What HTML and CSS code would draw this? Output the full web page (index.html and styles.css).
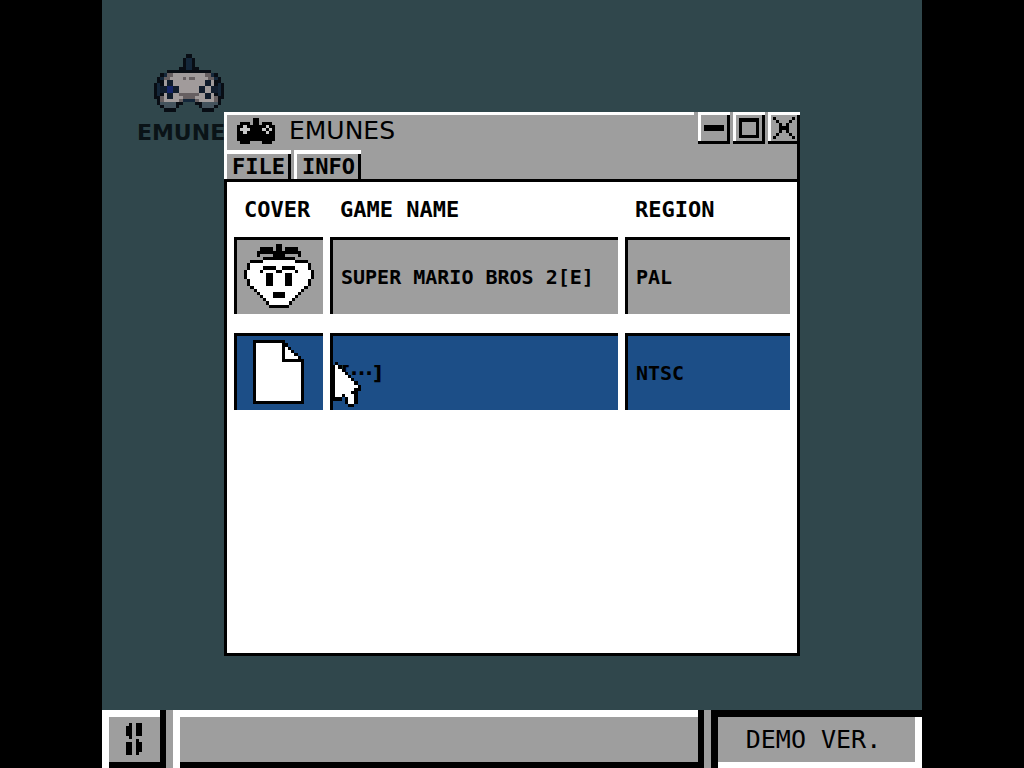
FILE: index.html
```
<!DOCTYPE html>
<html lang="en">
<head>
    <meta charset="UTF-8">
    <meta name="viewport" content="width=device-width, initial-scale=1.0">
    <title>EMUNES</title>
    <link rel="stylesheet" href="styles.css">
</head>
<body>
    <div class="screen">
        <main class="desktop">
            <button type="button" class="desktop-icon">
                <svg class="sprite" width="70" height="58" viewBox="0 -0.5 22 18" aria-hidden="true">
                    <path stroke="#080d14" d="M10 0h2M9 1h4M9 2h4M9 3h4M8 4h6M4 5h14M2 6h18M1 7h20M1 8h20M0 9h22M0 10h22M0 11h22M0 12h22M0 13h22M1 14h20M1 15h8M13 15h8M2 16h6M14 16h6M3 17h4M15 17h4" />
                    <path stroke="#14273a" d="M10 1h2M10 2h2M10 3h2M10 4h2M3 6h1M18 6h1M2 7h1M19 7h1M1 9h1M20 9h1M1 10h1M20 10h1M1 11h1M20 11h1M1 12h1M20 12h1M9 14h4" />
                    <path stroke="#a19b9b" d="M6 6h10M5 7h12M3 8h16M3 9h16M2 10h18M2 11h18M3 12h16M3 13h6M13 13h6M3 14h5M14 14h5" />
                    <path stroke="#665f61" d="M4 6h2M16 6h2M3 7h2M9 7h1M11 7h2M17 7h2M8 12h6M2 13h1M9 13h4M19 13h1M2 14h1M8 14h1M13 14h1M19 14h1" />
                    <path stroke="#44535d" d="M2 15h5M15 15h5M3 16h4M15 16h4" />
                    <path stroke="#101c2c" d="M4 8h2M4 9h2M2 10h6M2 11h6M4 12h2M4 13h2M16 8h2M16 9h2M14 10h2M18 10h2M14 11h2M18 11h2M16 12h2M16 13h2" />
                    <path stroke="#142468" d="M4 10h2M4 11h2" />
                </svg>
                <span>EMUNES</span>
            </button>

            <section class="window">
                <header class="window-header">
                    <div class="titlebar">
                        <h1 class="title">
                            <svg class="sprite" width="38" height="26" viewBox="0 -0.5 12 8" aria-hidden="true">
                                <path stroke="#000" d="M5 0h2M1 1h3M5 1h2M8 1h3M0 2h12M0 3h12M0 4h12M0 5h12M0 6h12M1 7h3M8 7h3" />
                                <path stroke="#c8c8c8" d="M2 2h1M1 3h3M2 4h1M9 2h1M8 3h1M10 3h1M9 4h1" />
                            </svg>
                            EMUNES
                        </h1>
                        <div class="controls">
                            <button type="button" class="control" aria-label="Minimize">
                                <svg class="sprite" width="20" height="20" viewBox="0 0 20 20"><path fill="#000" d="M0 7h20v6h-20z" /></svg>
                            </button>
                            <button type="button" class="control" aria-label="Maximize">
                                <svg class="sprite" width="20" height="20" viewBox="0 0 20 20"><path fill="#000" fill-rule="evenodd" d="M0 0h20v20h-20zM3 4v13h14v-13z" /></svg>
                            </button>
                            <button type="button" class="control" aria-label="Close">
                                <svg class="sprite" width="22" height="22" viewBox="0 -0.5 7 7"><path stroke="#000" d="M0 0h1M6 0h1M1 1h1M5 1h1M2 2h1M4 2h1M2 3h3M2 4h1M4 4h1M1 5h1M5 5h1M0 6h1M6 6h1" /></svg>
                            </button>
                        </div>
                    </div>
                    <nav class="menu">
                        <button type="button" class="menu-tab">FILE</button>
                        <button type="button" class="menu-tab">INFO</button>
                    </nav>
                </header>

                <div class="window-body">
                    <table class="games">
                        <thead>
                            <tr>
                                <th class="col-cover">COVER</th>
                                <th class="col-name">GAME NAME</th>
                                <th>REGION</th>
                            </tr>
                        </thead>
                        <tbody>
                            <tr>
                                <td class="cover">
                                    <svg class="sprite" width="70" height="64" viewBox="0 -0.5 22 20" role="img" aria-label="Strawberry">
                                        <path stroke="#fff" d="M6 5h10M2 6h18M2 7h18M1 8h20M1 9h20M1 10h20M2 11h18M2 12h18M3 13h16M4 14h14M5 15h12M6 16h10M7 17h8M8 18h6" />
                                        <path stroke="#000" d="M10 0h2M5 1h4M10 1h2M13 1h4M4 2h14M4 3h1M9 3h4M17 3h1M6 4h10M2 5h4M16 5h4M1 6h1M20 6h1M1 7h1M20 7h1M0 8h1M21 8h1M0 9h1M21 9h1M0 10h1M21 10h1M1 11h1M20 11h1M1 12h1M20 12h1M2 13h1M19 13h1M3 14h1M18 14h1M4 15h1M17 15h1M5 16h1M16 16h1M6 17h1M15 17h1M7 18h1M14 18h1M8 19h6" />
                                        <path stroke="#000" d="M6 7h4M12 7h4M5 8h1M10 8h2M16 8h1M7 9h2M13 9h2M7 10h2M13 10h2M7 11h2M13 11h2M7 12h2M13 12h2M9 15h4M9 16h4" />
                                    </svg>
                                </td>
                                <td>SUPER MARIO BROS 2[E]</td>
                                <td>PAL</td>
                            </tr>
                            <tr class="selected">
                                <td class="cover">
                                    <svg class="sprite" width="51" height="64" viewBox="0 0 16 20" role="img" aria-label="No cover">
                                        <path fill="#fff" d="M0 0h10v1h1v1h1v1h1v1h1v1h1v1h1v14h-16z" />
                                        <path fill="#000" d="M0 0h10v1h1v1h1v1h1v1h1v1h1v1h1v14h-16zM1 1v18h14v-12h-6v-6zM10 2v4h4v-1h-1v-1h-1v-1h-1v-1z" fill-rule="evenodd" />
                                    </svg>
                                </td>
                                <td class="no-name">[···]</td>
                                <td>NTSC</td>
                            </tr>
                        </tbody>
                    </table>
                </div>
            </section>

            <svg class="sprite cursor" width="32" height="45" viewBox="0 -0.5 10 14" aria-hidden="true">
                <path stroke="#000" d="M1 0h1M0 1h3M0 2h4M0 3h5M0 4h6M0 5h7M0 6h8M0 7h9M0 8h9M0 9h8M0 10h8M0 11h3M4 11h4M4 12h4M5 13h2" />
                <path stroke="#fff" d="M1 1h1M1 2h2M1 3h3M1 4h4M1 5h5M1 6h6M1 7h7M1 8h6M1 9h5M1 10h2M4 10h3M5 11h2M5 12h2" />
            </svg>
        </main>

        <footer class="taskbar">
            <button type="button" class="start" aria-label="Start">
                <svg class="sprite" width="16" height="32" viewBox="0 -0.5 5 10">
                    <path stroke="#000" d="M1 0h1M0 1h2M0 2h2M0 3h2M1 4h1M3 0h2M3 1h2M3 2h2M3 3h2M0 6h2M0 7h2M0 8h2M0 9h2M3 5h1M3 6h2M3 7h2M3 8h2M3 9h1" />
                </svg>
            </button>
            <div class="tasks"></div>
            <div class="version">DEMO VER.</div>
        </footer>
    </div>
</body>
</html>
```
FILE: styles.css
```
* {
    box-sizing: border-box;
}
body {
    margin: 0;
    background: #000;
    color: #000;
    font-family: "DejaVu Sans Mono", monospace;
}
button {
    margin: 0;
    padding: 0;
    border: none;
    background: none;
    color: inherit;
    font-family: inherit;
}
.sprite {
    display: block;
    flex: none;
    shape-rendering: crispEdges;
}
.screen {
    display: flex;
    flex-direction: column;
    width: calc(100% - 204px);
    min-height: 100vh;
    margin: 0 auto;
}

/* desktop */
.desktop {
    position: relative;
    flex: 1;
    background: #30474c;
}
.desktop-icon {
    position: absolute;
    top: 54px;
    left: 32px;
    display: flex;
    flex-direction: column;
    align-items: center;
    gap: 8px;
    width: 110px;
    color: #0a1317;
    font-family: "DejaVu Sans", sans-serif;
    font-size: 22px;
    font-weight: bold;
}
.cursor {
    position: absolute;
    top: 362px;
    left: 230px;
}

/* window */
.window {
    position: absolute;
    top: 112px;
    right: 122px;
    bottom: 54px;
    left: 122px;
    display: flex;
    flex-direction: column;
}
.window-header {
    background: #9e9e9e;
    box-shadow: inset 3px 0 #fff, inset -3px 0 #000;
}
.titlebar {
    display: flex;
    align-items: flex-start;
    gap: 4px;
}
.title {
    display: flex;
    flex: 1;
    align-items: center;
    gap: 14px;
    height: 38px;
    margin: 0;
    padding: 0 0 4px 13px;
    border-top: 3px solid #fff;
    font-family: "DejaVu Sans", sans-serif;
    font-size: 25px;
    font-weight: normal;
}
.controls {
    display: flex;
    gap: 3px;
}
.control {
    display: flex;
    align-items: center;
    justify-content: center;
    width: 32px;
    height: 32px;
    background: #9e9e9e;
    box-shadow: inset 0 3px #fff, inset 0 -3px #000, inset 3px 0 #fff, inset -3px 0 #000;
}
.menu {
    display: flex;
    gap: 3px;
}
.menu-tab {
    height: 29px;
    padding: 4px 6px 0 8px;
    box-shadow: inset 0 4px #fff, inset 3px 0 #fff, inset -3px 0 #000;
    font-size: 22px;
    font-weight: bold;
}
.window-body {
    flex: 1;
    border: 3px solid #000;
    background: #fff;
}

/* game list */
.games {
    width: 100%;
    table-layout: fixed;
    border-spacing: 7px 19px;
    font-size: 20px;
    font-weight: bold;
}
.games th {
    height: 17px;
    padding: 0 0 0 10px;
    font-size: 22px;
    line-height: 17px;
    text-align: left;
    white-space: nowrap;
}
.games td {
    height: 77px;
    padding: 0 0 0 8px;
    border-top: 3px solid #000;
    border-left: 3px solid #000;
    background: #9e9e9e;
}
.games .selected td {
    background: #1c4e87;
}
.games .col-cover {
    width: 89px;
}
.games .col-name {
    width: 288px;
}
.games .cover {
    padding: 0 3px 3px 0;
}
.games .cover .sprite {
    margin: 0 auto;
}
.games .no-name {
    font-family: "DejaVu Sans", sans-serif;
}

/* taskbar */
.taskbar {
    display: flex;
    gap: 7px;
    height: 58px;
    background: #9e9e9e;
}
.start {
    display: flex;
    align-items: center;
    justify-content: center;
    width: 64px;
}
.start,
.tasks {
    box-shadow: inset 7px 0 #fff, inset -6px 0 #000, inset 0 7px #fff, inset 0 -6px #000;
}
.tasks {
    flex: 1;
}
.version {
    display: flex;
    align-items: center;
    justify-content: center;
    width: 211px;
    padding-right: 6px;
    box-shadow: inset 0 7px #000, inset 7px 0 #000, inset -7px 0 #fff, inset 0 -6px #fff;
    font-size: 25px;
}
```
